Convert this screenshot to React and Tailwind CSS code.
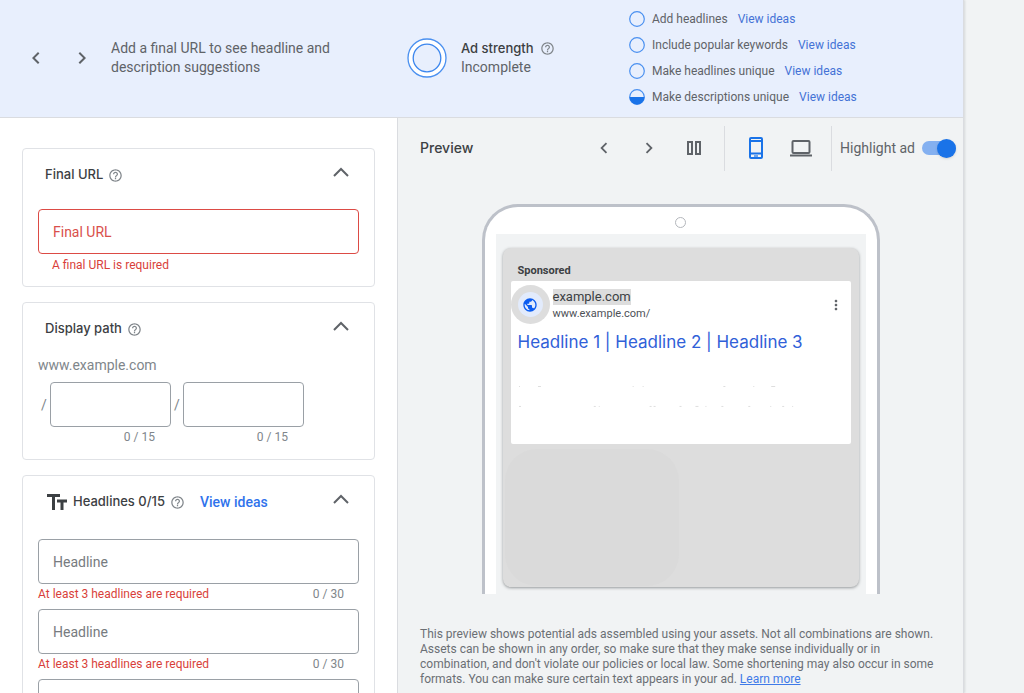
import { useState } from 'react';
import {
  MdChevronLeft,
  MdChevronRight,
  MdHelpOutline,
  MdMoreVert,
  MdPublic,
} from 'react-icons/md';

const IDEAS = [
  { label: 'Add headlines', half: false },
  { label: 'Include popular keywords', half: false },
  { label: 'Make headlines unique', half: false },
  { label: 'Make descriptions unique', half: true },
];

// leftover marks of the masked description lines, as [x, y, width]
const MARKS = [
  [8, 1, 1], [27, 1, 3], [122, 1, 1], [132, 1, 1], [213, 1, 2], [243, 1, 1], [261, 1, 4],
  [8, 21, 2], [83, 21, 2], [88, 21, 1], [139, 21, 2], [143, 21, 2], [169, 21, 2], [185, 21, 3],
  [195, 21, 1], [211, 21, 2], [238, 21, 2], [260, 21, 1], [272, 21, 2], [282, 21, 1],
];

function Help() {
  return <MdHelpOutline className="size-[15px] shrink-0 text-[#80868b]" aria-hidden="true" />;
}

function ArrowUp() {
  return (
    <svg viewBox="0 0 16 10" className="h-[10px] w-4" fill="none" stroke="#5f6368" strokeWidth="2">
      <path d="M1 9 8 2l7 7" />
    </svg>
  );
}

function Card({ title, icon, action, children }) {
  return (
    <section className="shrink-0 rounded border border-[#e0e2e6] bg-white px-[15px]">
      <div className="flex h-[52px] items-center pl-[7px] pr-[10px]">
        {icon}
        <h2 className="font-[Inter,sans-serif] text-[13px] font-medium text-[#3c4043]">{title}</h2>
        <span className="ml-[5px]"><Help /></span>
        {action}
        <button type="button" aria-label={`Collapse ${title}`} className="mb-1.5 ml-auto">
          <ArrowUp />
        </button>
      </div>
      {children}
    </section>
  );
}

function PathField({ id }) {
  return (
    <div className="flex">
      <span className="w-3 pt-[13px] text-center text-sm text-[#80868b]">/</span>
      <div>
        <input
          id={id}
          aria-label={id}
          className="block h-[45px] w-[121px] rounded border border-[#9aa0a6] px-3 text-sm outline-none"
        />
        <p className="pr-4 pt-0.5 text-right text-xs text-[#80868b]">0 / 15</p>
      </div>
    </div>
  );
}

function HeadlineField({ id }) {
  return (
    <div className="h-[70px]">
      <input
        id={id}
        aria-label="Headline"
        placeholder="Headline"
        className="block h-[45px] w-full rounded border border-[#9aa0a6] px-3.5 text-sm outline-none placeholder:text-[#777b80]"
      />
      <div className="flex justify-between pr-[15px] pt-0.5 text-xs">
        <span className="text-[#d93f3a]">At least 3 headlines are required</span>
        <span className="text-[#80868b]">0 / 30</span>
      </div>
    </div>
  );
}

function TopBar() {
  return (
    <header className="grid h-[118px] shrink-0 grid-cols-[407fr_222fr_334fr] items-center border-b border-[#dadce0] bg-[#e8effd] pb-0.5">
      <div className="flex items-center pl-6">
        <button type="button" aria-label="Previous suggestion" className="text-[#5f6368]">
          <MdChevronLeft className="size-6" />
        </button>
        <button type="button" aria-label="Next suggestion" className="ml-[22px] text-[#5f6368]">
          <MdChevronRight className="size-6" />
        </button>
        <p className="ml-[17px] w-[240px] text-sm leading-[19px] text-[#5f6368]">
          Add a final URL to see headline and description suggestions
        </p>
      </div>
      <div className="flex items-center gap-3.5">
        <svg viewBox="0 0 40 40" className="size-10 shrink-0">
          <circle cx="20" cy="20" r="19" fill="#fff" stroke="#4a90f0" strokeWidth="1.3" />
          <circle cx="20" cy="20" r="13.8" fill="#e8effd" stroke="#3b86ee" strokeWidth="1.3" />
        </svg>
        <div className="text-sm leading-[19px]">
          <div className="flex items-center gap-1.5 font-[Inter,sans-serif] text-[13px] leading-[19px] font-medium text-[#3c4043]">
            Ad strength <Help />
          </div>
          <div className="text-[#5f6368]">Incomplete</div>
        </div>
      </div>
      <ul className="flex flex-col gap-2.5 text-xs">
        {IDEAS.map(idea => (
          <li key={idea.label} className="flex items-center text-[#5f6368]">
            <svg viewBox="0 0 16 16" className="mr-[7px] size-4">
              <circle cx="8" cy="8" r="7.3" fill="none" stroke="#4a90f0" strokeWidth="1.2" />
              {idea.half && <path d="M.5 8h15a7.5 7.5 0 0 1-15 0Z" fill="#1a73e8" />}
            </svg>
            {idea.label}
            <a href="#ideas" className="ml-2.5 text-[#4472d6]">View ideas</a>
          </li>
        ))}
      </ul>
    </header>
  );
}

function EditPanel() {
  return (
    <div className="flex w-[398px] shrink-0 flex-col gap-[15px] overflow-hidden border-r border-[#dadce0] bg-white px-[22px] pt-[30px]">
      <Card title="Final URL">
        <div className="pb-[13px] pt-2">
          <input
            aria-label="Final URL"
            placeholder="Final URL"
            className="block h-[45px] w-full rounded border border-[#dc4b45] px-3.5 text-sm outline-none placeholder:text-[#d9504b]"
          />
          <p className="pl-3.5 pt-[3px] text-xs text-[#d93f3a]">A final URL is required</p>
        </div>
      </Card>

      <Card title="Display path">
        <p className="text-sm text-[#80868b]">www.example.com</p>
        <div className="flex pb-[14px] pt-[7px]">
          <PathField id="Path 1" />
          <PathField id="Path 2" />
        </div>
      </Card>

      <Card
        title="Headlines 0/15"
        icon={
          <svg viewBox="0 0 20 16" className="ml-0.5 mr-[6px] h-4 w-5" fill="#3c4043">
            <path d="M0 0h13v3H8v13H5V3H0Z" />
            <path d="M10 5.500h10v3h-3.500V16h-3V8.500H10Z" />
          </svg>
        }
        action={
          <a href="#ideas" className="ml-[15px] text-sm font-medium text-[#2f73ec]">View ideas</a>
        }
      >
        <div className="pt-[11px]">
          <HeadlineField id="headline-1" />
          <HeadlineField id="headline-2" />
          <HeadlineField id="headline-3" />
        </div>
      </Card>
    </div>
  );
}

function PreviewToolbar() {
  const [highlight, setHighlight] = useState(true);

  return (
    <div className="flex h-[60px] items-center pl-[22px] pr-[7px] text-[#5f6368]">
      <h2 className="mr-auto font-[Inter,sans-serif] text-sm font-medium text-[#3c4043]">Preview</h2>
      <button type="button" aria-label="Previous ad"><MdChevronLeft className="size-[22px]" /></button>
      <button type="button" aria-label="Next ad" className="ml-[23px]"><MdChevronRight className="size-[22px]" /></button>
      <button type="button" aria-label="Side by side" className="ml-[27px]">
        <svg viewBox="0 0 14 14" className="size-3.5" fill="none" stroke="#5f6368" strokeWidth="2">
          <path d="M1 1h4v12H1ZM9 1h4v12H9Z" />
        </svg>
      </button>
      <div className="ml-[23px] flex h-[45px] items-center gap-[27px] border-x border-[#dadce0] pl-6 pr-[19px]">
        <button type="button" aria-label="Mobile preview">
          <svg viewBox="0 0 14 22" className="h-[22px] w-3.5" fill="none" stroke="#1a73e8" strokeWidth="2">
            <rect x="1" y="1" width="12" height="20" rx="1" />
            <path d="M1 4h12M1 16.500h12" />
            <path d="M5 19h4" strokeWidth="1.2" />
          </svg>
        </button>
        <button type="button" aria-label="Desktop preview">
          <svg viewBox="0 0 22 18" className="h-[18px] w-[22px]" fill="none" stroke="#5f6368" strokeWidth="2">
            <rect x="2.500" y="2" width="17" height="12" rx="1" />
            <path d="M0 16.500h22" />
          </svg>
        </button>
      </div>
      <label htmlFor="highlight" className="ml-2 text-sm">Highlight ad</label>
      <input
        id="highlight"
        type="checkbox"
        role="switch"
        checked={highlight}
        onChange={e => setHighlight(e.target.checked)}
        className="ml-[7px] flex h-3.5 w-[34px] appearance-none items-center rounded-full bg-[#bdc1c6] before:size-[19px] before:shrink-0 before:rounded-full before:bg-white before:shadow checked:justify-end checked:bg-[#84b0f0] checked:before:bg-[#1a73e8]"
      />
    </div>
  );
}

function PhonePreview() {
  return (
    <div className="mx-auto mt-[26px] w-[398px] rounded-t-[36px] border-x-[3px] border-t-[3px] border-[#bdc1c9] bg-white px-[11px]">
      <div className="flex h-[27px] items-center justify-center pt-1">
        <span className="size-[11px] rounded-full border border-[#b4b7bc]" />
      </div>
      <div className="bg-[#f1f3f4] px-[7px] pb-[7px] pt-3.5">
        <div className="rounded-lg bg-[#dddddd] px-2 pt-3.5 shadow-[0_1px_3px_rgba(60,64,67,0.5)]">
          <p className="pl-[7px] text-[11px] leading-[17px] font-bold text-[#3c4043]">Sponsored</p>
          <div className="mt-0.5 h-[163px] rounded-xs bg-white">
            <div className="flex items-center pt-1">
              <span className="flex size-[39px] items-center justify-center rounded-full bg-[#dddddd]">
                <span className="flex size-[25px] items-center justify-center rounded-full bg-[#e2ebfc]">
                  <MdPublic className="size-4 text-[#0b5cf0]" />
                </span>
              </span>
              <div className="ml-[3px] pt-0.5 text-[#4d5156]">
                <p className="w-fit bg-[#dddddd] text-[13px] leading-4 text-[#3c4043]">example.com</p>
                <p className="text-[11px] leading-[18px]">www.example.com/</p>
              </div>
              <button type="button" aria-label="More options" className="ml-auto mr-[7px] text-[#5f6368]">
                <MdMoreVert className="size-4" />
              </button>
            </div>
            <p className="pl-[7px] pt-1.5 font-[Inter,sans-serif] text-[17px] leading-6 text-[#3060d8]">
              Headline 1 | Headline 2 | Headline 3
            </p>
            <svg viewBox="0 0 341 30" className="mt-[31px] w-full" fill="#dedede">
              {MARKS.map(([x, y, w]) => (
                <rect key={`${x}-${y}`} x={x} y={y} width={w} height="1" />
              ))}
            </svg>
          </div>
          <div className="h-[143px] pt-[5px]">
            <div className="-ml-1.5 h-[137px] w-[174px] rounded-[32px] bg-[#dadada]" />
          </div>
        </div>
      </div>
    </div>
  );
}

export default function App() {
  return (
    <div className="h-screen overflow-hidden bg-[#f1f3f4] pr-[60px] font-[Roboto,sans-serif]">
      <main className="flex h-full flex-col border-r border-[#dadce0] shadow-[1px_0_2px_rgba(60,64,67,0.15)]">
        <TopBar />
        <div className="flex min-h-0 flex-1">
          <EditPanel />
          <div className="min-w-0 flex-1">
            <PreviewToolbar />
            <PhonePreview />
            <p className="px-[22px] pt-[33px] text-xs leading-[15px] text-[#6b6f74]">
              This preview shows potential ads assembled using your assets. Not all combinations are
              shown. Assets can be shown in any order, so make sure that they make sense individually
              or in combination, and don't violate our policies or local law. Some shortening may also
              occur in some formats. You can make sure certain text appears in your ad.{' '}
              <a href="#learn" className="text-[#3f7ae8] underline">Learn more</a>
            </p>
          </div>
        </div>
      </main>
    </div>
  );
}
